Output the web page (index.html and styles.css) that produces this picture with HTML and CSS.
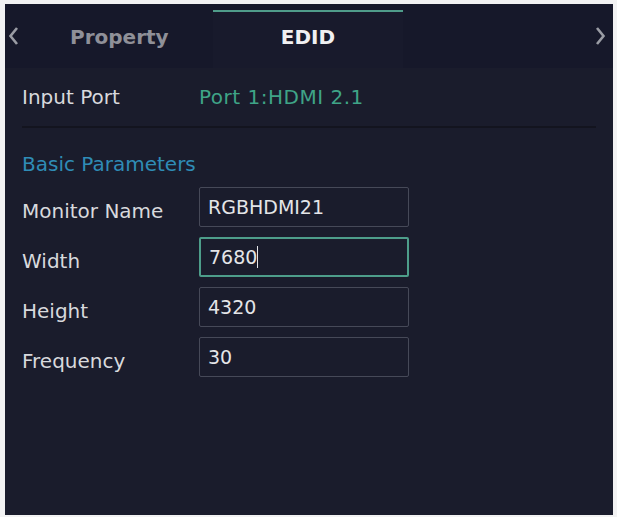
FILE: index.html
```html
<!DOCTYPE html>
<html lang="en">
<head>
    <meta charset="UTF-8">
    <title>EDID</title>
    <link rel="stylesheet" href="styles.css">
</head>
<body>

    <div class="panel">
        <div class="tabs">
            <span class="arrow">
                <svg width="11" height="20" viewBox="0 0 11 20"><path d="M9 2 L2.5 10 L9 18" fill="none" stroke="#9a9ca4" stroke-width="2.6"/></svg>
            </span>
            <div class="tab">Property</div>
            <div class="tab active">EDID</div>
            <div class="tab-rest"></div>
            <span class="arrow">
                <svg width="11" height="20" viewBox="0 0 11 20"><path d="M2 2 L8.5 10 L2 18" fill="none" stroke="#9a9ca4" stroke-width="2.6"/></svg>
            </span>
        </div>

        <div class="content">
            <div class="port-row">
                <span class="label">Input Port</span>
                <span class="port">Port 1:HDMI 2.1</span>
            </div>

            <h3 class="section">Basic Parameters</h3>

            <div class="field">
                <span class="label">Monitor Name</span>
                <div class="box">RGBHDMI21</div>
            </div>
            <div class="field">
                <span class="label">Width</span>
                <div class="box focus">7680<span class="caret"></span></div>
            </div>
            <div class="field">
                <span class="label">Height</span>
                <div class="box">4320</div>
            </div>
            <div class="field">
                <span class="label">Frequency</span>
                <div class="box">30</div>
            </div>
        </div>
    </div>

</body>
</html>
```

FILE: styles.css
```css
body {
    margin: 0;
    background: #f2f2f3;
    font-family: 'DejaVu Sans', Verdana, sans-serif;
}
.panel {
    margin: 4px 0 0 5px;
    width: 608px;
    height: 511px;
    background: #1a1c2c;
    color: #d8d9dd;
}
.tabs {
    display: flex;
    align-items: stretch;
    height: 64px;
    background: #16182a;
}
.arrow {
    display: flex;
    align-items: center;
    padding: 0 4px 0 3px;
    width: 14px;
}
.arrow:first-child {
    padding-left: 3px;
    width: 58px;
}
.tab {
    width: 143px;
    display: flex;
    align-items: center;
    font-weight: bold;
    font-size: 20px;
    color: #8f9098;
    padding-top: 2px;
}
.tab.active {
    width: 190px;
    justify-content: center;
    color: #f0f0f2;
    border-top: 2px solid #4f9c8a;
    margin-top: 6px;
    padding-top: 0;
    padding-bottom: 6px;
    background: #181a2c;
}
.tab-rest {
    flex: 1;
}
.content {
    padding: 0 17px;
}
.port-row {
    display: flex;
    align-items: center;
    height: 58px;
    border-bottom: 2px solid #13141f;
}
.label {
    width: 177px;
    font-size: 20px;
    color: #d8d9dd;
}
.field .label {
    padding-top: 7px;
}
.port {
    font-size: 20px;
    letter-spacing: 0.5px;
    color: #3fa487;
}
.section {
    margin: 24px 0 11px;
    font-size: 20px;
    font-weight: normal;
    color: #2f8cb6;
}
.field {
    display: flex;
    align-items: center;
    margin-bottom: 10px;
}
.box {
    width: 200px;
    height: 38px;
    border: 1px solid #464958;
    border-radius: 2px;
    display: flex;
    align-items: center;
    padding-left: 8px;
    font-size: 19px;
    color: #e4e5e8;
}
.box.focus {
    border: 2px solid #4d9d8a;
    width: 198px;
    height: 36px;
}
.caret {
    display: inline-block;
    width: 1px;
    height: 22px;
    background: #e4e5e8;
}
```
